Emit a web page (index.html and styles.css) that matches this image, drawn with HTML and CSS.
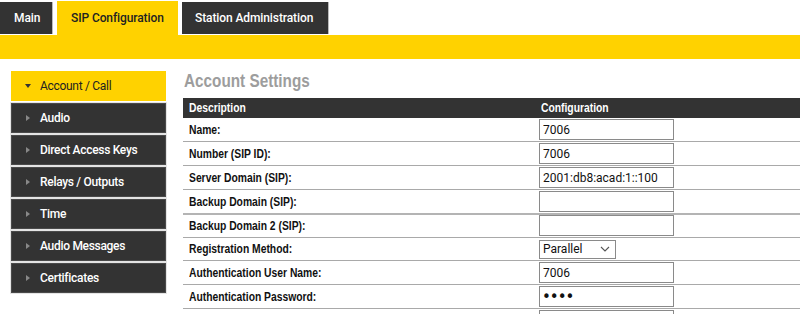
FILE: index.html
```html
<!DOCTYPE html>
<html>
<head>
<meta charset="utf-8">
<link rel="stylesheet" href="styles.css">
</head>
<body>
<div class="tabs">
  <div class="tab">Main</div>
  <div class="tab active">SIP Configuration</div>
  <div class="tab">Station Administration</div>
</div>
<div class="bar"></div>
<div class="content">
  <ul class="side">
    <li class="item active"><span class="tri-down"></span>Account / Call</li>
    <li class="item"><span class="tri-right"></span>Audio</li>
    <li class="item"><span class="tri-right"></span>Direct Access Keys</li>
    <li class="item"><span class="tri-right"></span>Relays / Outputs</li>
    <li class="item"><span class="tri-right"></span>Time</li>
    <li class="item"><span class="tri-right"></span>Audio Messages</li>
    <li class="item"><span class="tri-right"></span>Certificates</li>
  </ul>
  <div class="main">
    <h2 class="title"><span class="nr">Account Settings</span></h2>
    <table class="grid">
      <thead>
        <tr><th class="c1"><span class="nr">Description</span></th><th class="c2"><span class="nr">Configuration</span></th></tr>
      </thead>
      <tbody>
        <tr><td class="lbl"><span class="nr">Name:</span></td><td class="val"><input class="field" type="text" value="7006"></td></tr>
        <tr><td class="lbl"><span class="nr">Number (SIP ID):</span></td><td class="val"><input class="field" type="text" value="7006"></td></tr>
        <tr><td class="lbl"><span class="nr">Server Domain (SIP):</span></td><td class="val"><input class="field" type="text" value="2001:db8:acad:1::100"></td></tr>
        <tr class="dbl"><td class="lbl"><span class="nr">Backup Domain (SIP):</span></td><td class="val"><input class="field" type="text" value=""></td></tr>
        <tr><td class="lbl"><span class="nr">Backup Domain 2 (SIP):</span></td><td class="val"><input class="field" type="text" value=""></td></tr>
        <tr><td class="lbl"><span class="nr">Registration Method:</span></td><td class="val"><div class="sel">Parallel<svg class="chev" width="10" height="6" viewBox="0 0 10 6"><path d="M1 1 L5 5 L9 1" fill="none" stroke="#555" stroke-width="1.1"/></svg></div></td></tr>
        <tr><td class="lbl"><span class="nr">Authentication User Name:</span></td><td class="val"><input class="field" type="text" value="7006"></td></tr>
        <tr><td class="lbl"><span class="nr">Authentication Password:</span></td><td class="val"><input class="field pw" type="password" value="7006"></td></tr>
        <tr><td class="lbl"></td><td class="val"><input class="field" type="text" value=""></td></tr>
      </tbody>
    </table>
  </div>
</div>
</body>
</html>
```

FILE: styles.css
```css
* { box-sizing: border-box; }
html, body { margin: 0; padding: 0; }
body {
  width: 800px;
  height: 314px;
  overflow: hidden;
  background: #fff;
  font-family: Roboto, "Liberation Sans", sans-serif;
}
.tabs {
  display: flex;
  align-items: flex-end;
  height: 35px;
  gap: 4px;
}
.tab {
  flex: none;
  height: 32px;
  margin-bottom: 1px;
  background: #333;
  color: #fff;
  font-size: 12px;
  font-weight: 500;
  letter-spacing: -0.1px;
  white-space: nowrap;
  display: flex;
  align-items: center;
  padding: 0 14px;
  border-right: 1px solid #bbb;
}
.tab:first-child { width: 53px; }
.tab.active {
  background: #ffd200;
  color: #222;
  height: 34px;
  margin-bottom: 0;
  border-right: none;
  width: 121px;
}
.tab:last-child { width: 147px; padding: 0 13px; }
.bar {
  height: 24px;
  background: #ffd200;
}
.content {
  display: flex;
  padding-top: 12px;
  padding-left: 11px;
  gap: 17px;
}
.side {
  list-style: none;
  margin: 0;
  padding: 0;
  width: 155px;
  flex: none;
  display: flex;
  flex-direction: column;
  gap: 2px;
}
.item {
  height: 30px;
  background: #333;
  color: #fff;
  border: 1px solid #4a4a4a;
  box-shadow: 0 0 0 1px #e4e4e4;
  font-size: 12px;
  font-weight: 500;
  letter-spacing: -0.3px;
  display: flex;
  align-items: center;
  padding-left: 13px;
}
.item.active {
  background: #ffd200;
  color: #222;
  border-color: #ffd200;
  box-shadow: none;
  font-weight: 400;
}
.tri-down {
  width: 0; height: 0;
  border-left: 3px solid transparent;
  border-right: 3px solid transparent;
  border-top: 4px solid #333;
  margin-right: 9px;
}
.tri-right {
  width: 0; height: 0;
  border-top: 3px solid transparent;
  border-bottom: 3px solid transparent;
  border-left: 4px solid #888;
  margin-left: 1px;
  margin-right: 10px;
}
.main {
  flex: 1;
  min-width: 0;
}
.nr {
  display: inline-block;
  white-space: nowrap;
  transform: scaleX(0.86);
  transform-origin: left center;
}
.title {
  margin: 0 0 5px 1px;
  height: 22px;
  line-height: 20px;
  font-family: "Liberation Sans", sans-serif;
  font-weight: 700;
  font-size: 18px;
  color: #9d9d9d;
}
.title .nr { transform: scaleX(0.85); }
.grid {
  border-collapse: collapse;
  width: 640px;
  font-family: "Liberation Sans", sans-serif;
  font-size: 12px;
}
.grid th {
  background: #333;
  color: #fff;
  text-align: left;
  height: 20px;
  padding: 0 6px;
  font-weight: 700;
}
.c1 { width: 352px; }
.grid td {
  border-bottom: 1px solid #a9a9a9;
  padding: 1px 0 1px;
  height: 23px;
}
.grid tr.dbl td { border-bottom: 2px solid #b4b4b4; }
.grid tr.dbl + tr td { padding-top: 0; height: 22px; }
.lbl {
  font-weight: 700;
  color: #111;
  padding-left: 6px !important;
}
.val { padding-left: 4px !important; }
.field {
  display: block;
  width: 135px;
  height: 21px;
  margin: 0;
  border: 1px solid #8a8a8a;
  padding: 0 3px;
  font-family: Roboto, "Liberation Sans", sans-serif;
  font-size: 12px;
  color: #111;
  background: #fff;
}
.field.pw { font-family: "DejaVu Sans", sans-serif; font-size: 15px; letter-spacing: -1px; padding-left: 2px; }
.sel {
  width: 77px;
  height: 19px;
  border: 1px solid #8a8a8a;
  display: flex;
  align-items: center;
  justify-content: space-between;
  padding: 0 5px 0 3px;
  font-family: Roboto, "Liberation Sans", sans-serif;
  font-size: 12px;
  color: #111;
  margin: 0;
}
```
